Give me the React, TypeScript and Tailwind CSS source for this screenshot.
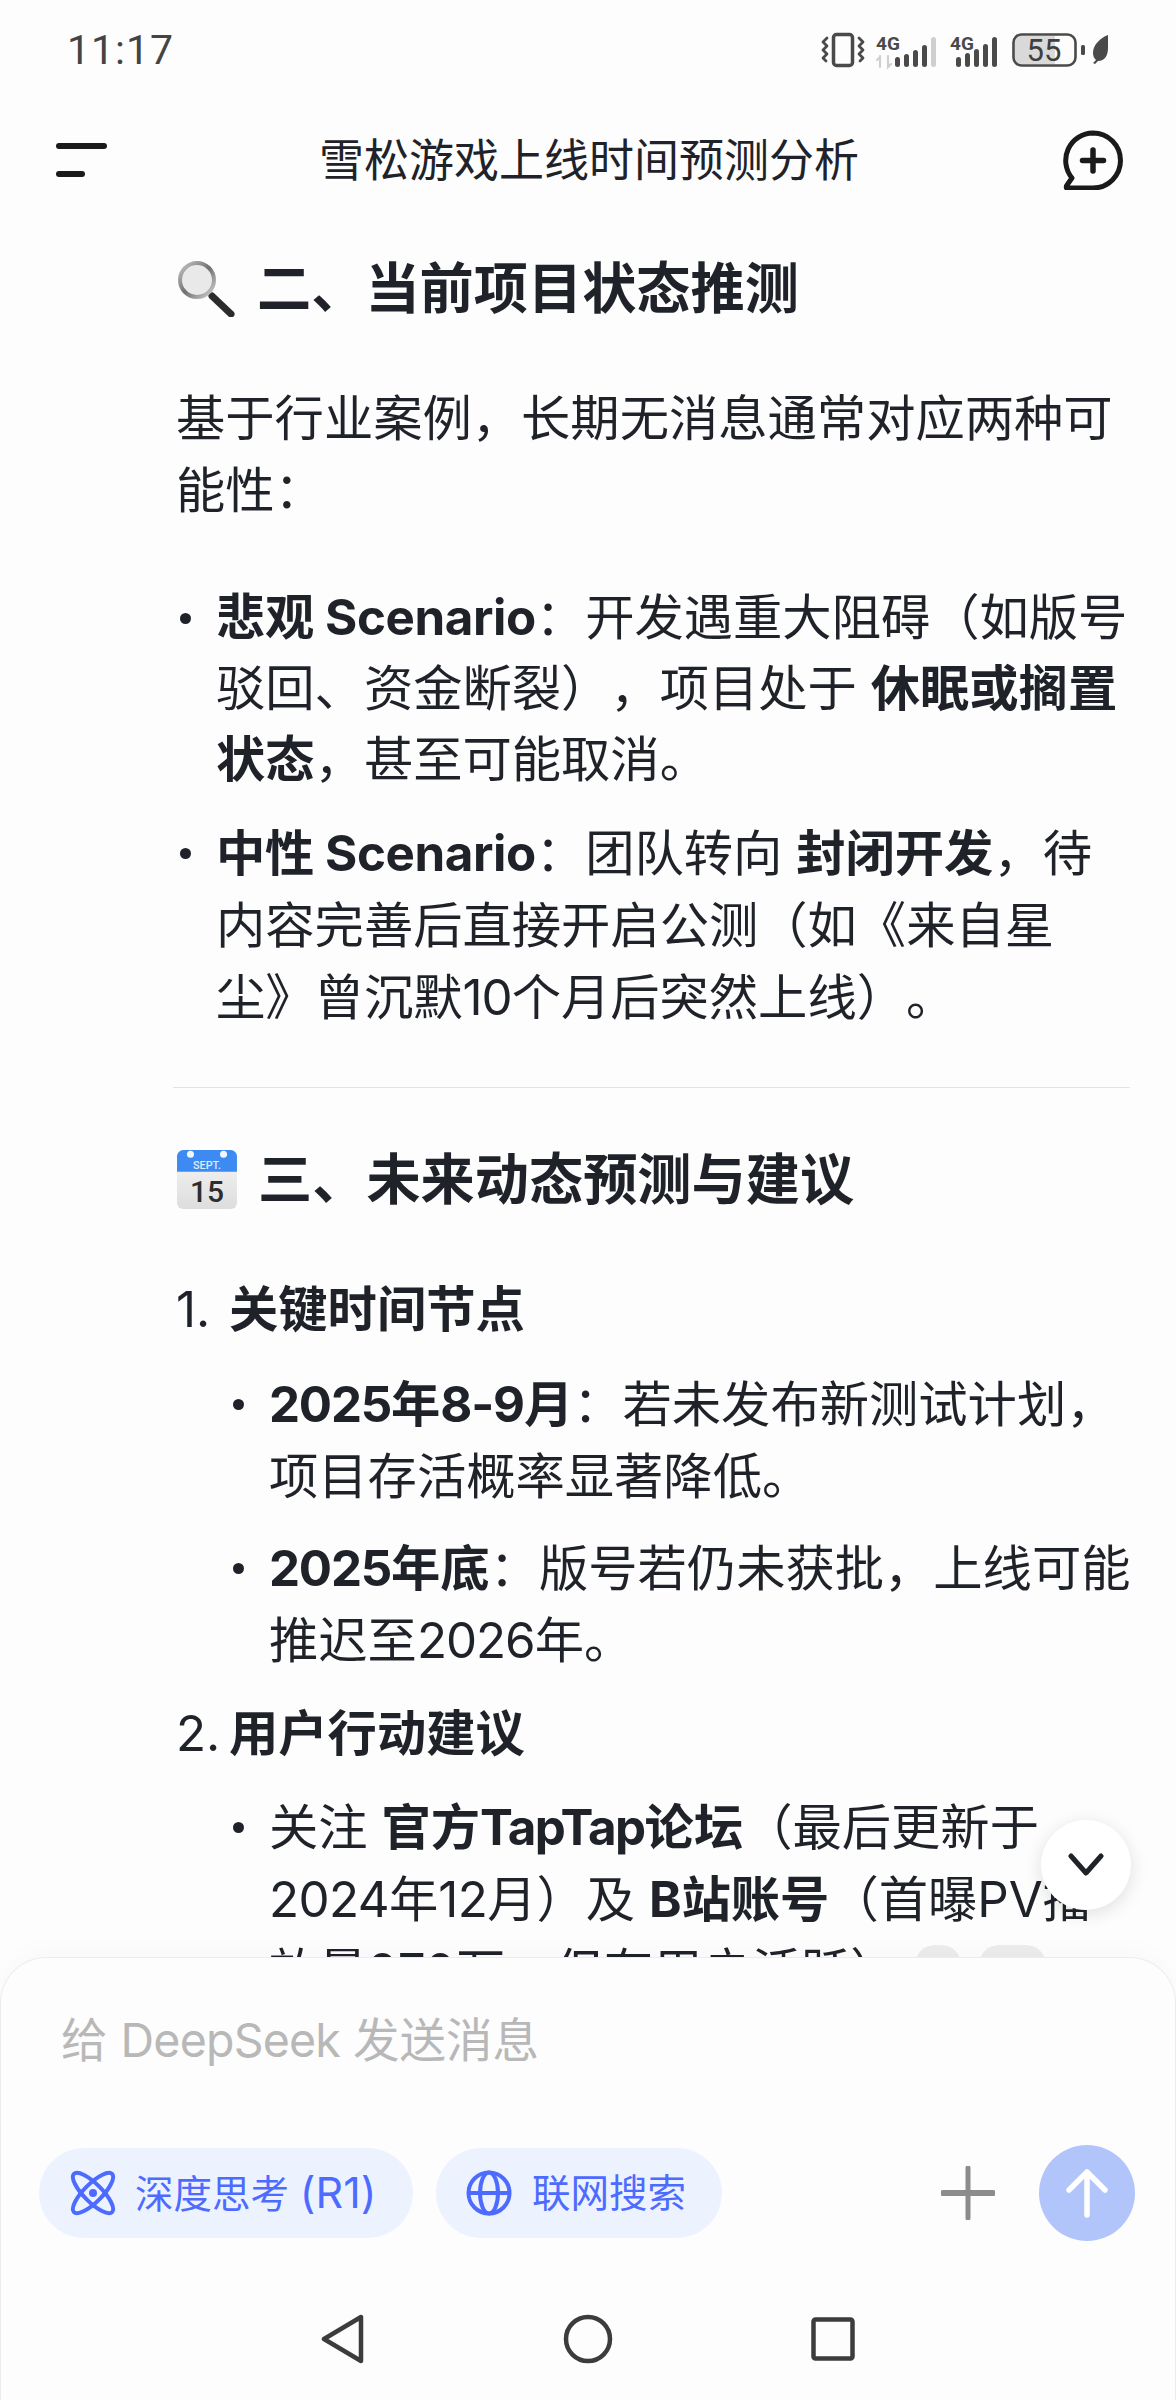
import React from "react";

function Dot({ className }: { className: string }) {
  return (
    <span className={className}>
      <span className="block h-[11px] w-[11px] rounded-full bg-[#1f2329]" />
    </span>
  );
}

function Bullet({ children, tight }: { children: React.ReactNode; tight?: boolean }) {
  return (
    <li className={tight ? "flex leading-[71px]" : "flex"}>
      <Dot className="flex h-[72px] w-[40px] shrink-0 items-center pl-[4px]" />
      <div className="whitespace-nowrap">{children}</div>
    </li>
  );
}

function StatusIcons() {
  return (
    <svg width="300" height="50" viewBox="0 0 300 50" fill="none" className="shrink-0">
      <g stroke="#4a4a4a" strokeWidth="3.5" strokeLinecap="round" strokeLinejoin="round">
        <rect x="14.5" y="9.5" width="19" height="31" rx="3" />
        <path d="M8 13l-4 4 4 4-4 4 4 4-4 4 3 3" strokeWidth="2.8" />
        <path d="M40 13l4 4-4 4 4 4-4 4 4 4-3 3" strokeWidth="2.8" />
      </g>
      <g transform="translate(4 0)">
        <text x="53" y="25" fontFamily="Roboto, sans-serif" fontWeight="700" fontSize="19" fill="#4a4a4a">4G</text>
        <path d="M57 31v11M54 35l3-3M65 31v11l3-3" stroke="#d0d0d0" strokeWidth="2.2" strokeLinecap="round" />
        <g fill="#4a4a4a">
          <rect x="72" y="32" width="5" height="10" rx="2.5" />
          <rect x="81" y="29" width="5" height="13" rx="2.5" />
          <rect x="90" y="25" width="5" height="17" rx="2.5" />
          <rect x="99" y="20" width="5" height="22" rx="2.5" />
        </g>
        <rect x="108" y="12" width="5" height="30" rx="2.5" fill="#cfcfcf" />
        <text x="127" y="25" fontFamily="Roboto, sans-serif" fontWeight="700" fontSize="19" fill="#4a4a4a">4G</text>
        <g fill="#4a4a4a">
          <rect x="133" y="32" width="5" height="10" rx="2.5" />
          <rect x="142" y="28" width="5" height="14" rx="2.5" />
          <rect x="151" y="24" width="5" height="18" rx="2.5" />
          <rect x="160" y="19" width="5" height="23" rx="2.5" />
          <rect x="169" y="12" width="5" height="30" rx="2.5" />
        </g>
        <path d="M198 11h34v28h-34a6 6 0 0 1-6-6v-16a6 6 0 0 1 6-6z" fill="#d9d9d9" />
        <rect x="190.5" y="9.5" width="62" height="31" rx="8" stroke="#4a4a4a" strokeWidth="2.6" />
        <text x="221" y="36" textAnchor="middle" fontFamily="Roboto, sans-serif" fontSize="31" fill="#3f3f3f">55</text>
        <rect x="258" y="20" width="4" height="10" rx="1.5" fill="#4a4a4a" />
        <path d="M285 10c-8 3-15 10-15 18 0 3 1 5 3 7l-3 3 2 1 3-3c7 0 10-6 10-13 0-5 0-9 0-13z" fill="#4a4a4a" />
      </g>
    </svg>
  );
}

function Magnifier() {
  return (
    <svg width="60" height="58" viewBox="0 0 60 58" className="shrink-0">
      <defs>
        <linearGradient id="rim" x1="0" y1="0" x2="1" y2="1">
          <stop offset="0" stopColor="#c8c8c8" />
          <stop offset="0.5" stopColor="#6f6f6f" />
          <stop offset="1" stopColor="#d4d4d4" />
        </linearGradient>
      </defs>
      <path d="M36 37l19 18" stroke="#2b2b2b" strokeWidth="7" strokeLinecap="round" />
      <circle cx="21" cy="21" r="17" fill="#e9e9e9" stroke="url(#rim)" strokeWidth="4" />
    </svg>
  );
}

function Calendar() {
  return (
    <svg width="62" height="62" viewBox="0 0 60 60" className="shrink-0">
      <defs>
        <linearGradient id="page" x1="0" y1="0" x2="0" y2="1">
          <stop offset="0" stopColor="#f7f7f7" />
          <stop offset="1" stopColor="#dddddd" />
        </linearGradient>
      </defs>
      <rect x="1" y="2" width="58" height="57" rx="6" fill="url(#page)" />
      <path d="M7 2h46a6 6 0 0 1 6 6v15H1V8a6 6 0 0 1 6-6z" fill="#3d8bf2" />
      <circle cx="14" cy="6" r="3.4" fill="#f3f6fb" />
      <circle cx="46" cy="6" r="3.4" fill="#f3f6fb" />
      <text x="30" y="20" textAnchor="middle" fontFamily="Roboto, sans-serif" fontWeight="500" fontSize="10.5" fill="#dfeafc">SEPT.</text>
      <text x="30" y="52" textAnchor="middle" fontFamily="Roboto, sans-serif" fontWeight="500" fontSize="29" fill="#2d2d2d">15</text>
    </svg>
  );
}

export default function App() {
  return (
    <div
      className="relative h-[2400px] w-[1176px] overflow-hidden bg-[#fdfdfd] text-[49.3px] leading-[72px] text-[#1f2329] [text-spacing-trim:space-all]"
      style={{ fontFamily: 'Inter, "Noto Sans CJK SC", sans-serif' }}
    >
      <div className="flex h-[100px] items-center justify-between pl-[67px] pr-[57px]">
        <span className="text-[41px] leading-none tracking-[1px] text-[#444444]" style={{ fontFamily: 'Roboto, sans-serif' }}>11:17</span>
        <StatusIcons />
      </div>

      <header className="flex h-[120px] items-center justify-between pl-[56px] pr-[52px]">
        <div className="flex w-[60px] flex-col gap-[22px]">
          <span className="block h-[6px] w-[51px] rounded-full bg-[#1a1a1a]" />
          <span className="block h-[6px] w-[29px] rounded-full bg-[#1a1a1a]" />
        </div>
        <h1 className="text-[45px] font-normal leading-none text-[#1f2329]">雪松游戏上线时间预测分析</h1>
        <svg width="62" height="60" viewBox="0 0 62 60" fill="none">
          <path d="M31 3a27.5 27.5 0 0 1 0 55H5c-1 0-1-2 0-3l5-7A27.5 27.5 0 0 1 31 3z" stroke="#1a1a1a" strokeWidth="5" strokeLinejoin="round" />
          <path d="M31 20v21M20.5 30.5h21" stroke="#1a1a1a" strokeWidth="5.5" strokeLinecap="round" />
        </svg>
      </header>

      <main className="pl-[176px]">
        <h2 className="mt-[32px] flex h-[72px] items-center gap-[21px] text-[54.2px] font-bold whitespace-nowrap">
          <Magnifier />
          <span>二、当前项目状态推测</span>
        </h2>
        <p className="mt-[58px] whitespace-nowrap">
          基于行业案例，长期无消息通常对应两种可<br />能性：
        </p>
        <ul className="mt-[56px] flex flex-col">
          <Bullet tight>
            <b><span className="tracking-[-0.4px]">悲观 Scenario</span></b>：开发遇重大阻碍（如版号<br />
            驳回、资金断裂），项目处于 <b>休眠或搁置</b><br />
            <b>状态</b>，甚至可能取消。
          </Bullet>
          <div className="h-[22px]" />
          <Bullet>
            <b><span className="tracking-[-0.4px]">中性 Scenario</span></b>：团队转向 <b>封闭开发</b>，待<br />
            内容完善后直接开启公测（如《来自星<br />
            尘》曾沉默<span className="tracking-[-1px]">10</span>个月后突然上线）。
          </Bullet>
        </ul>
        <hr className="mb-[55px] ml-[-3px] mr-[46px] mt-[54px] border-0 border-t border-[#e3e3e3]" />
        <h2 className="flex h-[72px] items-center gap-[20px] text-[54.2px] font-bold whitespace-nowrap">
          <Calendar />
          <span>三、未来动态预测与建议</span>
        </h2>
        <div className="mt-[58px] flex h-[72px] whitespace-nowrap">
          <span className="w-[53px] shrink-0">1.</span>
          <b>关键时间节点</b>
        </div>
        <ul className="mt-[23px] flex flex-col gap-[20px] pl-[53px]">
          <Bullet>
            <b><span className="tracking-[-1.2px]">2025</span>年<span className="tracking-[-1.2px]">8-9</span>月</b>：若未发布新测试计划，<br />
            项目存活概率显著降低。
          </Bullet>
          <Bullet>
            <b><span className="tracking-[-1.2px]">2025</span>年底</b>：版号若仍未获批，上线可能<br />
            推迟至<span className="tracking-[-1px]">2026</span>年。
          </Bullet>
        </ul>
        <div className="mt-[21px] flex h-[72px] whitespace-nowrap">
          <span className="w-[53px] shrink-0">2.</span>
          <b>用户行动建议</b>
        </div>
        <ul className="mt-[22px] pl-[53px]">
          <Bullet>
            关注 <b>官方<span className="tracking-[-1.6px]">TapTap</span>论坛</b>（最后更新于<br />
            <span className="tracking-[-0.6px]">2024</span>年<span className="tracking-[-0.6px]">12</span>月）及 <b>B站账号</b>（首曝PV播<br />
            放量270万，但有用户活跃）
          </Bullet>
        </ul>
      </main>

      <div className="absolute left-[915px] top-[1945px] h-[40px] w-[46px] rounded-full bg-[#ececec]" />
      <div className="absolute left-[979px] top-[1945px] h-[40px] w-[67px] rounded-full bg-[#ececec]" />

      <button className="absolute left-[1041px] top-[1820px] flex h-[90px] w-[90px] items-center justify-center rounded-full bg-white shadow-[0_4px_18px_rgba(0,0,0,0.12)]">
        <svg width="36" height="24" viewBox="0 0 36 24" fill="none">
          <path d="M3 3l15 17L33 3" stroke="#1f2329" strokeWidth="5" strokeLinecap="round" strokeLinejoin="round" />
        </svg>
      </button>

      <div className="absolute inset-x-0 bottom-0 h-[443px] rounded-t-[46px] border-x border-t border-[#ececec] bg-[#fdfdfd] shadow-[0_-8px_24px_rgba(0,0,0,0.02)]">
        <div className="pl-[60px] pt-[46px] text-[46.5px] leading-[72px] text-[#b8b8b8]">给 <span className="tracking-[-0.8px]">DeepSeek</span> 发送消息</div>
        <div className="mt-[69px] flex items-center pl-[38px] pr-[40px]">
          <div className="flex h-[90px] w-[374px] items-center gap-[19px] rounded-full bg-[#edf3fe] pl-[31px] text-[38.5px] text-[#4d6bfe]">
            <svg width="46" height="46" viewBox="0 0 46 46" fill="none" stroke="#4d6bfe" strokeWidth="4" className="shrink-0">
              <ellipse cx="23" cy="23" rx="9" ry="27" transform="rotate(-45 23 23)" />
              <ellipse cx="23" cy="23" rx="9" ry="27" transform="rotate(45 23 23)" />
              <circle cx="23" cy="23" r="4" fill="#4d6bfe" stroke="none" />
            </svg>
            <span className="whitespace-nowrap">深度思考 <span className="text-[43px]">(R1)</span></span>
          </div>
          <div className="ml-[23px] flex h-[90px] w-[286px] items-center gap-[20px] rounded-full bg-[#edf3fe] pl-[30px] text-[38.5px] text-[#4d6bfe]">
            <svg width="46" height="46" viewBox="0 0 46 46" fill="none" stroke="#4d6bfe" strokeWidth="4" className="shrink-0">
              <circle cx="23" cy="23" r="20.5" />
              <ellipse cx="23" cy="23" rx="9" ry="20.5" />
              <path d="M3 23h40" />
            </svg>
            <span className="whitespace-nowrap">联网搜索</span>
          </div>
          <svg width="54" height="54" viewBox="0 0 54 54" fill="none" className="ml-auto mr-[44px]" stroke="#8c8c8c" strokeLinecap="round">
            <path d="M2 27h50" strokeWidth="6" />
            <path d="M27 2v50" strokeWidth="5" />
          </svg>
          <div className="flex h-[96px] w-[96px] items-center justify-center rounded-full bg-[#b2c5fb]">
            <svg width="44" height="50" viewBox="0 0 44 50" fill="none" stroke="#ffffff" strokeWidth="5.5" strokeLinecap="round" strokeLinejoin="round">
              <path d="M22 47V4M4 22L22 4l18 18" />
            </svg>
          </div>
        </div>
        <nav className="mt-[73px] flex items-center pl-[319px]">
          <svg width="46" height="50" viewBox="0 0 46 50" fill="none" stroke="#3c3c3c" strokeWidth="4.5" strokeLinejoin="round">
            <path d="M41 3v44L4 25z" />
          </svg>
          <svg width="50" height="50" viewBox="0 0 50 50" fill="none" stroke="#3c3c3c" strokeWidth="4.5" className="ml-[197px]">
            <circle cx="25" cy="25" r="22" />
          </svg>
          <svg width="44" height="44" viewBox="0 0 44 44" fill="none" stroke="#3c3c3c" strokeWidth="4.5" className="ml-[198px]">
            <rect x="2.5" y="2.5" width="39" height="39" rx="2" />
          </svg>
        </nav>
      </div>
    </div>
  );
}
